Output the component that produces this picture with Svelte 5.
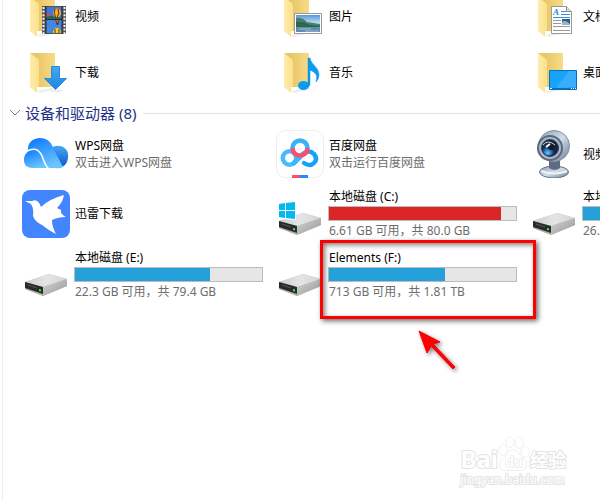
<script>
  const folders = [
    { name: "视频", icon: "video" },
    { name: "图片", icon: "picture" },
    { name: "文档", icon: "document" },
    { name: "下载", icon: "download" },
    { name: "音乐", icon: "music" },
    { name: "桌面", icon: "desktop" },
  ];

  const devices = [
    { name: "WPS网盘", note: "双击进入WPS网盘", icon: "wps" },
    { name: "百度网盘", note: "双击运行百度网盘", icon: "baidu" },
    { name: "视频设备", icon: "webcam" },
    { name: "迅雷下载", icon: "xunlei" },
    { name: "本地磁盘 (C:)", note: "6.61 GB 可用，共 80.0 GB", icon: "drive", system: true, used: 92 },
    { name: "本地磁盘 (D:)", note: "26.2 GB 可用", icon: "drive", used: 74 },
    { name: "本地磁盘 (E:)", note: "22.3 GB 可用，共 79.4 GB", icon: "drive", used: 72 },
    { name: "Elements (F:)", note: "713 GB 可用，共 1.81 TB", icon: "drive", used: 62, marked: true },
  ];

  let open = $state(true);
</script>

{#snippet folderIcon(kind)}
  <svg class="icon" viewBox="0 0 48 48" aria-hidden="true">
    <path d="M15 43 L33 39 L35 41 L18 45Z" fill="#eee" />
    <path d="M8 5H33V39H8Z" fill="url(#folder-back)" />
    <path d="M8 5L16 11Q17 12 17 14V38L15 39V45L8 39Z" fill="url(#folder-front)" />
    {#if kind === "video"}
      <path d="M20 14H44V42H20Z" fill="#555" />
      <path d="M21.5 15V42M42.5 15V42" stroke="#f4f4f4" stroke-width="2" stroke-dasharray="2 1.6" />
      <path d="M24 15H40V27H24Z" fill="#4674d2" />
      <path d="M24 28H40V41H24Z" fill="#4386df" />
      <path d="M24 21L28 23L31 27H24Z" fill="#e34a48" />
      <path d="M24 25Q32 22 40 26V27H24Z" fill="#246b50" />
      <ellipse cx="35" cy="21" rx="4" ry="4.5" fill="#eeb52a" />
      <path d="M33 17Q31 21 34 26M36 17Q38 21 35 26" stroke="#71231f" fill="none" />
      <path d="M33 27H38L36 33H35Z" fill="#28303b" />
      <path d="M34 28H37L36 31H35Z" fill="#e9513d" />
      <path d="M31 41Q31 36 35 36Q39 36 39 41Z" fill="#f3cf27" />
      <path d="M33 41V37M37 41V37" stroke="#612c23" />
      <path d="M24 14V42M40 14V42M24 27.5H40" stroke="#202734" />
    {:else if kind === "picture"}
      <path d="M18.5 21.5H45.5V41.5H18.5Z" fill="#fff" stroke="#999" />
      <path d="M20 23H44V40H20Z" fill="url(#photo-sky)" />
      <path d="M20 26Q26 25 31 30L44 32V36H20Z" fill="#4a8068" />
      <path d="M20 30Q27 29 34 33L44 34V36H20Z" fill="#296653" />
      <path d="M20 35H44V40H20Z" fill="#608eac" />
      <path d="M23 37H35M29 39H43" stroke="#9bbdcf" />
    {:else if kind === "document"}
      <path d="M21.5 14.5H36.5L41.5 19.5V41.5H21.5Z" fill="#fff" stroke="#999" />
      <path d="M36.5 14.5V19.5H41.5" fill="#ddd" stroke="#888" />
      <text x="23" y="23" class="doc-letter">A</text>
      <path d="M31 19.5H36M31 22.5H40M23 25.5H40" stroke="#3296d2" />
      <path d="M23 28.5H31M23 31.5H31M23 34.5H40M23 38.5H40" stroke="#999" />
      <path d="M32 27H40V33H32Z" fill="#315c87" />
      <path d="M32 30Q35 27 40 32V33H32Z" fill="#91b9c9" />
    {:else if kind === "download"}
      <path d="M22 42H43L36 45Z" fill="#eee" />
      <path d="M29.5 18.5H37.5V30.5H44.5L33.5 41.5L22.5 30.5H29.5Z" fill="url(#arrow-blue)" stroke="#268ce0" />
    {:else if kind === "music"}
      <ellipse cx="27.5" cy="37.5" rx="5.5" ry="4.5" fill="#0b9cf1" />
      <path d="M32 10H34C35 17 43 19 43 27Q43 31 40 34Q43 25 34 22V37L32 39Z" fill="#0b9cf1" stroke="#0789df" stroke-width=".5" />
    {:else if kind === "desktop"}
      <path d="M19.5 22.5H46.5V41.5H19.5Z" fill="#18a3fb" stroke="#096fb4" />
      <path d="M46 23V39L26 40L39 23Z" fill="#38adfc" />
      <path d="M20 40.5H46" stroke="#0873b9" />
      <path d="M20 40.5H22M41 40.5H42M43 40.5H44M45 40.5H46" stroke="#fff" />
    {/if}
  </svg>
{/snippet}

{#snippet deviceIcon(kind, system)}
  <svg class="icon" viewBox="0 0 48 48" aria-hidden="true">
    {#if kind === "wps"}
      <path d="M29 18Q33 15 38 16C44 17 47 22 46 28Q45 37 36 38H22V18Z" fill="url(#wps-back)" />
      <path d="M6 21C5 13 11 8 18 8C26 8 30 13 32 20L41 37Q38 39 33 38H18L7 25Z" fill="url(#wps-main)" />
      <path d="M2 30C2 23 7 20 12 20C17 20 19 24 21 29Q23 35 26 38H11C5 38 2 35 2 30Z" fill="url(#wps-main)" />
      <path d="M5 21C11 18 16 19 19 24C22 29 22 35 27 39" fill="none" stroke="#fff" stroke-width="1.5" />
    {:else if kind === "baidu"}
      <rect x=".5" y=".5" width="47" height="47" rx="9" fill="#fff" stroke="#eee" />
      <g fill="none" stroke-width="4.5">
        <circle cx="13.5" cy="28" r="6.7" stroke="#45bdfc" />
        <path d="M18 33L27 24Q33 19 38 24Q42 29 38 33Q34 37 28 33" stroke="#16a2f9" stroke-linecap="round" />
        <path d="M18 33L27 24" stroke="#37b9fa" stroke-linecap="round" />
        <path d="M16.5 18A7.5 7.5 0 1 1 31.5 18" stroke="#35b4f9" />
        <path d="M16.5 18A7.5 7.5 0 0 0 31.5 18" stroke="#fa4d72" />
      </g>
      <path d="M16 45H24V48H16Z" fill="#fb4e75" />
      <path d="M24 45H32V48H24Z" fill="#238cfa" />
    {:else if kind === "webcam"}
      <ellipse cx="24" cy="42" rx="14.5" ry="6" fill="url(#metal)" stroke="#637285" />
      <path d="M11 41Q24 46 37 41" stroke="#eef3f6" stroke-width="2" fill="none" />
      <path d="M19 30H30V38Q25 42 19 38Z" fill="#5d6c80" />
      <circle cx="24" cy="16" r="15.5" fill="url(#metal)" stroke="#8090a5" />
      <circle cx="20" cy="18" r="12" fill="#aab6c8" stroke="#596980" stroke-width="2" />
      <circle cx="20" cy="18" r="8.5" fill="#162539" stroke="#33445a" />
      <circle cx="19" cy="19" r="6.5" fill="url(#lens)" />
      <path d="M13 15Q18 9 25 15" stroke="#c9dbeb" stroke-width="1" fill="none" />
      <circle cx="21" cy="17" r="3" fill="#101b2a" />
      <path d="M16 17L20 14" stroke="#fff" stroke-width="2" />
    {:else if kind === "xunlei"}
      <rect width="48" height="48" rx="8" fill="#4285ff" />
      <path d="M3 11L10 11Q16 8 19 17Q27 9 42 5Q41 12 35 18L39 20Q38 24 44 27Q36 27 30 30Q30 37 34 44Q26 40 20 35Q13 32 11 26Q12 19 9 14Z" fill="#fff" />
    {:else}
      <path d="M3 31L27 23L45 28V35L21 45L3 38Z" fill="#bbb" />
      <path d="M3 31L27 23L45 28L21 36Z" fill="url(#drive-top)" />
      <path d="M21 36L45 28V35L21 45Z" fill="url(#drive-side)" />
      <path d="M3 31L21 36V45L3 38Z" fill="#b1b1b1" />
      <path d="M3 31L21 36V43L3 37Z" fill="#292b2b" />
      <path d="M6 34L15 37" stroke="#555" />
      <path d="M17 38L19 38.5V40.5L17 40Z" fill="#40ef43" />
      {#if system}
        <path d="M2 12L20 10V30L2 29Z" fill="#fff" />
        <path d="M3 14L9 13V20H3ZM10 13L19 12V20H10ZM3 21H9V28L3 27ZM10 21H19V29L10 28Z" fill="#00b9f0" />
      {/if}
    {/if}
  </svg>
{/snippet}

<svg class="defs" aria-hidden="true">
  <defs>
    <linearGradient id="folder-back"><stop offset=".3" stop-color="#e9c768" /><stop offset="1" stop-color="#f7db87" /></linearGradient>
    <linearGradient id="folder-front"><stop stop-color="#ffecab" /><stop offset="1" stop-color="#fbdf8b" /></linearGradient>
    <linearGradient id="photo-sky" x2="0" y2="1"><stop stop-color="#5798de" /><stop offset=".6" stop-color="#dcecf5" /></linearGradient>
    <linearGradient id="arrow-blue" x2="0" y2="1"><stop stop-color="#49a6ee" /><stop offset="1" stop-color="#1988e3" /></linearGradient>
    <linearGradient id="wps-main" x2=".5" y2="1"><stop stop-color="#0775ff" /><stop offset="1" stop-color="#6ac4ff" /></linearGradient>
    <linearGradient id="wps-back" x2="0" y2="1"><stop stop-color="#45a8f6" /><stop offset="1" stop-color="#0756cc" /></linearGradient>
    <linearGradient id="metal" x2="1" y2="1"><stop stop-color="#8c9cb3" /><stop offset=".5" stop-color="#d3dce6" /><stop offset="1" stop-color="#6c7c92" /></linearGradient>
    <radialGradient id="lens" cx=".4" cy=".8"><stop stop-color="#70c2fb" /><stop offset=".6" stop-color="#236fb5" /><stop offset="1" stop-color="#142a48" /></radialGradient>
    <linearGradient id="drive-top"><stop stop-color="#ccc" /><stop offset=".5" stop-color="#e4e5e7" /><stop offset="1" stop-color="#d5d5d5" /></linearGradient>
    <linearGradient id="drive-side" x2="1" y2="1"><stop stop-color="#d3d3d3" /><stop offset="1" stop-color="#999" /></linearGradient>
  </defs>
</svg>

<main class="explorer">
  <ul class="grid folders">
    {#each folders as folder}
      <li class="tile">
        {@render folderIcon(folder.icon)}
        <span class="name">{folder.name}</span>
      </li>
    {/each}
  </ul>

  <h2 class="group">
    <button class="toggle" aria-expanded={open} onclick={() => (open = !open)}>
      <svg class="chevron" class:closed={!open} viewBox="0 0 12 8" aria-hidden="true">
        <path d="M1 1L6 6L11 1" />
      </svg>
      设备和驱动器 (8)
    </button>
  </h2>

  {#if open}
    <ul class="grid devices">
      {#each devices as device}
        <li class="tile">
          {@render deviceIcon(device.icon, device.system)}
          <div class="info">
            <div class="name">{device.name}</div>
            {#if device.used}
              <div class="bar" role="meter" aria-label={device.name} aria-valuenow={device.used} aria-valuemin="0" aria-valuemax="100">
                <div class="fill" class:full={device.used > 90} style="width: {device.used}%"></div>
              </div>
            {/if}
            {#if device.note}
              <div class="note">{device.note}</div>
            {/if}
          </div>
          {#if device.marked}
            <div class="mark"></div>
            <svg class="pointer" viewBox="0 0 44 48" aria-hidden="true">
              <path d="M3 3L24 14L17 16L39 39L37 41L15 18L11 25Z" />
            </svg>
          {/if}
        </li>
      {/each}
    </ul>
  {/if}

  <div class="watermark">
    <div class="brand">
      <span class="latin">Bai</span>
      <svg class="paw" viewBox="0 0 32 36" aria-hidden="true">
        <ellipse cx="5" cy="14" rx="4" ry="5" />
        <ellipse cx="12" cy="6" rx="4" ry="5" />
        <ellipse cx="21" cy="7" rx="4" ry="5" />
        <ellipse cx="27" cy="16" rx="4" ry="5" />
        <path d="M15 14C20 14 21 19 26 23C31 28 28 35 22 34H8C1 35 0 28 4 24C9 20 9 14 15 14Z" />
        <text x="7" y="31">du</text>
      </svg>
      <span class="cjk">经验</span>
    </div>
    <div class="site">jingyan.baidu.com</div>
  </div>
</main>

<style>
  :global(body) {
    margin: 0;
    background: #fff;
  }

  .defs {
    position: absolute;
    width: 0;
    height: 0;
  }

  .explorer {
    position: relative;
    box-sizing: border-box;
    min-height: 100vh;
    margin-left: 2px;
    border-left: 1px solid #eee;
    overflow: hidden;
    font-family: "Noto Sans", "Noto Sans CJK SC", sans-serif;
    font-size: 12px;
    line-height: 17px;
    color: #000;
  }

  .grid {
    display: grid;
    grid-template-columns: repeat(3, 241px);
    column-gap: 13px;
    margin: 0;
    padding: 0 0 0 19px;
    list-style: none;
  }

  .folders {
    row-gap: 8px;
    margin-top: -8px;
  }

  .devices {
    row-gap: 10px;
  }

  .tile {
    position: relative;
    display: flex;
    align-items: center;
    gap: 4px;
  }

  .icon {
    flex: none;
    width: 48px;
    height: 48px;
  }

  .doc-letter {
    font: italic bold 9px "Liberation Serif", serif;
    fill: #2088c9;
  }

  .info {
    flex: 1;
    min-width: 0;
  }

  .name,
  .note {
    padding-left: 1px;
    white-space: nowrap;
  }

  .note {
    color: #6d6d6d;
  }

  .bar {
    box-sizing: border-box;
    height: 15px;
    margin: 1px 0;
    border: 1px solid #bcbcbc;
    background: #e6e6e6;
  }

  .fill {
    height: 100%;
    background: #26a0da;
  }

  .fill.full {
    background: #da2626;
  }

  .group {
    display: flex;
    align-items: center;
    gap: 7px;
    margin: 6px 0;
    font-size: 15px;
    font-weight: 400;
    line-height: 22px;
  }

  .group::after {
    content: "";
    flex: 1;
    height: 1px;
    background: #e2e2e2;
  }

  .toggle {
    display: flex;
    align-items: center;
    gap: 4px;
    padding: 0 0 0 6px;
    border: 0;
    background: none;
    color: #1e3287;
    font: inherit;
    cursor: pointer;
  }

  .chevron {
    width: 12px;
    height: 8px;
    fill: none;
    stroke: #777;
  }

  .chevron.closed {
    transform: rotate(-90deg);
  }

  .mark {
    position: absolute;
    top: -9px;
    left: 44px;
    box-sizing: border-box;
    width: 216px;
    height: 79px;
    border: 3px solid #fe0000;
    box-shadow:
      2px 2px 5px rgba(0, 0, 0, 0.6),
      inset 2px 2px 5px rgba(0, 0, 0, 0.5);
  }

  .pointer {
    position: absolute;
    top: 79px;
    left: 140px;
    width: 44px;
    height: 48px;
    overflow: visible;
    fill: #fe0000;
    stroke: #fe0000;
    stroke-linejoin: round;
    filter: drop-shadow(2px 2px 2px rgba(0, 0, 0, 0.5));
  }

  .watermark {
    position: absolute;
    right: 34px;
    bottom: 12px;
    color: #fff;
    font-weight: 700;
    -webkit-text-stroke: 2px #e4e4e4;
    paint-order: stroke fill;
  }

  .brand {
    display: flex;
    align-items: flex-end;
    height: 36px;
  }

  .latin {
    font-size: 24px;
    line-height: 26px;
  }

  .paw {
    width: 32px;
    height: 36px;
    fill: #fff;
    stroke: #e0e0e0;
  }

  .paw text {
    font-size: 14px;
  }

  .cjk {
    font-size: 18px;
    line-height: 24px;
  }

  .site {
    font-size: 12px;
    line-height: 16px;
    font-weight: 400;
  }
</style>
